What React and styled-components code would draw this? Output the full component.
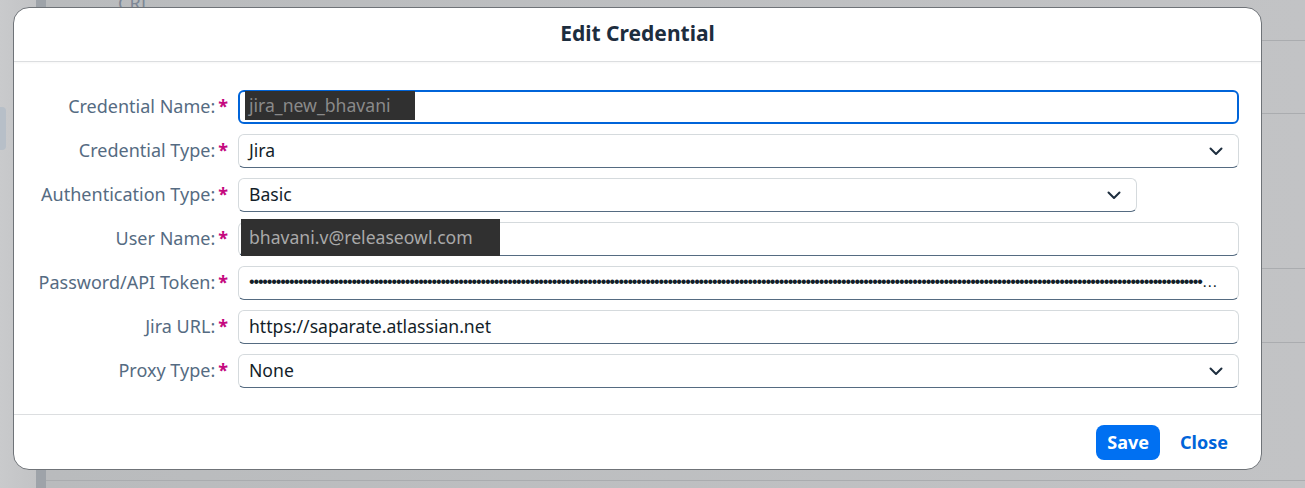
import styled, { createGlobalStyle } from "styled-components";

const GlobalStyle = createGlobalStyle`
  html, body {
    margin: 0;
    padding: 0;
    width: 1305px;
    height: 488px;
    overflow: hidden;
    font-family: "Noto Sans", "Liberation Sans", sans-serif;
  }
`;

const fields = [
  { label: "Credential Name", value: "jira_new_bhavani", kind: "focused", redact: 170 },
  { label: "Credential Type", value: "Jira", kind: "select" },
  { label: "Authentication Type", value: "Basic", kind: "select", narrow: true },
  { label: "User Name", value: "bhavani.v@releaseowl.com", kind: "input", redact: 259 },
  { label: "Password/API Token", value: "•".repeat(260), kind: "password" },
  { label: "Jira URL", value: "https://saparate.atlassian.net", kind: "input" },
  { label: "Proxy Type", value: "None", kind: "select" },
];

const bgLines = [40, 113, 268, 342, 480];

const Chevron = () => (
  <svg width="14" height="9" viewBox="0 0 14 9" fill="none">
    <path d="M1.5 1.5 L7 7 L12.5 1.5" stroke="#1d2d3e" strokeWidth="2" strokeLinecap="round" strokeLinejoin="round" />
  </svg>
);

const App = () => {
  return (
    <>
      <GlobalStyle />
      <Page>
        <SideRail>
          <RailTab />
        </SideRail>
        <RailEdge />
        <Content>
          <Crumb>CRI</Crumb>
          {bgLines.map((y) => (
            <BgLine key={y} style={{ top: y }} />
          ))}
        </Content>

        <Dialog>
          <Header>
            <Title>Edit Credential</Title>
          </Header>
          <Body>
            {fields.map((f) => (
              <Row key={f.label}>
                <Label>
                  {f.label}:<Required>*</Required>
                </Label>
                <Field $kind={f.kind} $narrow={f.narrow}>
                  <Value $kind={f.kind}>
                    {f.redact ? (
                      <Redacted $w={f.redact} $focused={f.kind === "focused"}>
                        {f.value}
                      </Redacted>
                    ) : (
                      f.value
                    )}
                  </Value>
                  {f.kind === "select" && <Chevron />}
                </Field>
              </Row>
            ))}
          </Body>
          <Footer>
            <SaveButton>Save</SaveButton>
            <CloseButton>Close</CloseButton>
          </Footer>
        </Dialog>
      </Page>
    </>
  );
};

export default App;

const Page = styled.div`
  position: relative;
  display: flex;
  width: 1305px;
  height: 488px;
  background: #c4c5c7;
`;

const SideRail = styled.div`
  width: 36px;
  background: linear-gradient(90deg, #c9cacc, #c2c3c5);
  padding-top: 107px;
`;

const RailTab = styled.div`
  width: 6px;
  height: 43px;
  background: #b7bfc8;
  border-radius: 0 4px 4px 0;
`;

const RailEdge = styled.div`
  width: 10px;
  background: #9ea3a9;
`;

const Content = styled.div`
  position: relative;
  flex: 1;
  background: linear-gradient(90deg, #b9bbbd, #c2c3c5);
`;

const Crumb = styled.div`
  margin: -6px 0 0 72px;
  font-size: 18px;
  line-height: 18px;
  color: #7d8796;
`;

const BgLine = styled.div`
  position: absolute;
  left: 0;
  right: 0;
  height: 1px;
  background: #aaacaf;
`;

const Dialog = styled.div`
  position: absolute;
  left: 13px;
  top: 7px;
  width: 1247px;
  height: 461px;
  background: #ffffff;
  border: 1px solid #6f7378;
  border-radius: 16px;
  display: flex;
  flex-direction: column;
  overflow: hidden;
`;

const Header = styled.div`
  height: 53px;
  display: flex;
  align-items: center;
  justify-content: center;
  border-bottom: 1px solid #dcdee0;
  box-shadow: 0 1px 2px rgba(0, 0, 0, 0.04);
`;

const Title = styled.h1`
  margin: -4px 0 0;
  font-size: 21px;
  font-weight: 700;
  color: #1d2d3e;
`;

const Body = styled.div`
  flex: 1;
  display: flex;
  flex-direction: column;
  gap: 10px;
  padding: 28px 22px 0 0;
  border-bottom: 1px solid #dcdee0;
`;

const Row = styled.div`
  display: grid;
  grid-template-columns: 214px minmax(0, 1fr);
  column-gap: 10px;
  align-items: center;
`;

const Label = styled.label`
  text-align: right;
  font-size: 18px;
  line-height: 24px;
  margin-top: -2px;
  color: #556b82;
  white-space: nowrap;
`;

const Required = styled.span`
  color: #c4087e;
  font-weight: 700;
  margin-left: 3px;
`;

const Field = styled.div`
  box-sizing: border-box;
  height: 34px;
  width: ${(p) => (p.$narrow ? "899px" : "100%")};
  min-width: 0;
  display: flex;
  align-items: center;
  justify-content: space-between;
  gap: 8px;
  border-radius: 6px;
  background: #ffffff;
  border: ${(p) => (p.$kind === "focused" ? "2px solid #0064d9" : "1px solid #d5dadd")};
  border-bottom-color: ${(p) => (p.$kind === "focused" ? "#0064d9" : "#556b81")};
  padding-left: ${(p) => (p.$kind === "focused" ? "9px" : "10px")};
  padding-right: ${(p) => (p.$kind === "password" ? "17px" : "15px")};
`;

const Value = styled.div`
  flex: 1;
  min-width: 0;
  font-family: ${(p) => (p.$kind === "password" ? '"Liberation Sans", sans-serif' : "inherit")};
  font-size: ${(p) => (p.$kind === "password" ? "16px" : "17.6px")};
  letter-spacing: ${(p) => (p.$kind === "password" ? "-1.15px" : "0")};
  margin-top: -2px;
  color: #131e29;
  white-space: nowrap;
  overflow: ${(p) => (p.$kind === "password" ? "hidden" : "visible")};
  text-overflow: ellipsis;
`;

const Redacted = styled.span`
  display: inline-block;
  box-sizing: border-box;
  width: ${(p) => p.$w}px;
  height: ${(p) => (p.$focused ? 29 : 37)}px;
  line-height: ${(p) => (p.$focused ? 29 : 37)}px;
  margin: ${(p) => (p.$focused ? "-2px 0 0 -4px" : "-2px 0 0 -8px")};
  padding-left: ${(p) => (p.$focused ? 4 : 8)}px;
  background: #303030;
  color: ${(p) => (p.$focused ? "#8a8a8a" : "#a9a9a9")};
  vertical-align: middle;
`;

const Footer = styled.div`
  height: 54px;
  display: flex;
  align-items: center;
  justify-content: flex-end;
  gap: 10px;
  padding-right: 23px;
`;

const SaveButton = styled.button`
  height: 35px;
  min-width: 63px;
  padding: 0 11px;
  border: none;
  border-radius: 8px;
  background: #0070f2;
  color: #ffffff;
  font-family: inherit;
  font-size: 18px;
  font-weight: 700;
  line-height: 1;
`;

const CloseButton = styled.button`
  height: 35px;
  padding: 0 10px;
  border: none;
  background: transparent;
  color: #0064d9;
  font-family: inherit;
  font-size: 18px;
  font-weight: 700;
  line-height: 1;
`;
